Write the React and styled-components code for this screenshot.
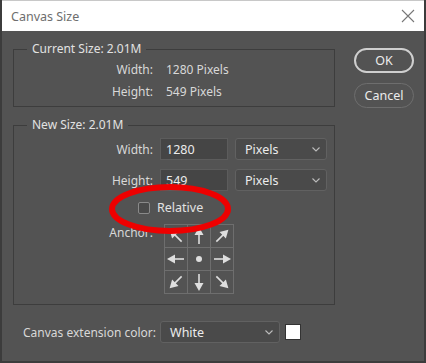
import React from 'react'
import styled, {createGlobalStyle} from 'styled-components'

const GlobalStyle = createGlobalStyle`
    html, body {
        margin: 0;
        padding: 0;
        background: #535353;
    }
    body {
        font-family: "Noto Sans", "Liberation Sans", sans-serif;
    }
`

const Window = styled.div`
    width: 426px;
    height: 363px;
    box-sizing: border-box;
    display: flex;
    flex-direction: column;
    background: #535353;
    border-left: 2px solid #3c3c3c;
    border-right: 2px solid #3c3c3c;
    border-bottom: 2px solid #3c3c3c;
    position: relative;
    overflow: hidden;
`

const TitleBar = styled.div`
    height: 31px;
    flex-shrink: 0;
    margin: 0 -2px;
    background: #ffffff;
    border-top: 1px solid #c8c8c8;
    border-left: 1px solid #c8c8c8;
    border-right: 1px solid #c8c8c8;
    box-sizing: border-box;
    display: flex;
    align-items: center;
    justify-content: space-between;
    padding: 0 10px 0 10px;
    color: #6e6e6e;
    font-size: 12.5px;
`

const Close = styled.svg`
    width: 14px;
    height: 14px;
`

const Body = styled.div`
    display: flex;
    padding: 10px 0 0 11px;
    gap: 19px;
`

const LeftCol = styled.div`
    display: flex;
    flex-direction: column;
    gap: 10px;
    width: 322px;
`

const Group = styled.fieldset`
    margin: 0;
    border: 1px solid #3d3d3d;
    padding: 0;
    height: ${p => p.$h}px;
    box-sizing: border-box;
    display: flex;
    flex-direction: column;
`

const Legend = styled.legend`
    color: #e2e2e2;
    font-size: 12px;
    padding: 0 5px;
    margin-left: 13px;
    line-height: 16px;
`

const InfoRows = styled.div`
    display: flex;
    flex-direction: column;
    gap: 6px;
    padding-top: 5px;
`

const InfoRow = styled.div`
    display: grid;
    grid-template-columns: 139px auto;
    column-gap: 13px;
    font-size: 12px;
    color: #d8d8d8;
    line-height: 16px;
`

const Label = styled.span`
    text-align: right;
    color: #d8d8d8;
    font-size: 12px;
`

const FieldRows = styled.div`
    display: flex;
    flex-direction: column;
    padding-top: 5px;
    gap: 9px;
`

const FieldRow = styled.div`
    display: grid;
    grid-template-columns: 139px 68px 92px;
    column-gap: 7px;
    align-items: center;
`

const Input = styled.div`
    height: 22px;
    box-sizing: border-box;
    background: #454545;
    border: 1px solid #5c5c5c;
    color: #ececec;
    font-size: 12.5px;
    padding-left: 5px;
    display: flex;
    align-items: center;
`

const Select = styled.div`
    height: 22px;
    width: ${p => p.$w || 92}px;
    box-sizing: border-box;
    background: #4a4a4a;
    border: 1px solid #616161;
    border-radius: 3px;
    color: #ececec;
    font-size: 12.5px;
    padding: 0 6px 0 9px;
    display: flex;
    align-items: center;
    justify-content: space-between;
`

const Chevron = styled.svg`
    width: 8px;
    height: 5px;
`

const CheckRow = styled.div`
    display: flex;
    align-items: center;
    gap: 7px;
    padding-left: 124px;
    margin-top: 8px;
    font-size: 12.5px;
    color: #e2e2e2;
`

const Box = styled.span`
    width: 10px;
    height: 10px;
    border: 1px solid #8a8a8a;
    border-radius: 2px;
    background: #4a4a4a;
`

const AnchorRow = styled.div`
    display: flex;
    align-items: flex-start;
    margin-top: 8px;
    gap: 11px;
`

const AnchorLabel = styled(Label)`
    width: 139px;
    margin-top: 0px;
`

const Grid = styled.div`
    display: grid;
    grid-template-columns: repeat(3, 23px);
    grid-template-rows: repeat(3, 23px);
    border-top: 1px solid #6e6e6e;
    border-left: 1px solid #6e6e6e;
`

const Cell = styled.div`
    border-right: 1px solid #6e6e6e;
    border-bottom: 1px solid #6e6e6e;
    display: flex;
    align-items: center;
    justify-content: center;
`

const Buttons = styled.div`
    display: flex;
    flex-direction: column;
    gap: 10px;
    padding-top: 7px;
`

const Button = styled.div`
    width: 60px;
    height: 25px;
    box-sizing: border-box;
    border-radius: 13px;
    border: ${p => p.$primary ? '2px solid #cfcfcf' : '1px solid #6e6e6e'};
    color: #ececec;
    font-size: 12.5px;
    display: flex;
    align-items: center;
    justify-content: center;
`

const Footer = styled.div`
    display: grid;
    grid-template-columns: 132px auto auto;
    justify-content: start;
    align-items: center;
    padding: 16px 0 0 21px;
    column-gap: 5px;
    font-size: 12px;
    color: #d8d8d8;
    white-space: nowrap;
`

const Swatch = styled.span`
    width: 14px;
    height: 14px;
    background: #fff;
    border: 1px solid #333;
`

const Annotation = styled.svg`
    position: absolute;
    left: 104px;
    top: 182px;
    width: 130px;
    height: 58px;
    pointer-events: none;
`

const dirs = [-135, -90, -45, 180, null, 0, 135, 90, 45]

const Arrow = ({angle}) => (
    <svg width="20" height="20" viewBox="-10 -10 20 20">
        {angle === null ? (
            <circle cx="0" cy="0" r="3" fill="#dedede"/>
        ) : (
            <g transform={`rotate(${angle})`}>
                <line x1="-8" y1="0" x2="3" y2="0" stroke="#dedede" strokeWidth="1.6"/>
                <polygon points="9,0 1,-4.5 1,4.5" fill="#dedede"/>
            </g>
        )}
    </svg>
)

const ChevronIcon = () => (
    <Chevron viewBox="0 0 8 5">
        <polyline points="0.5,0.5 4,4 7.5,0.5" fill="none" stroke="#bcbcbc" strokeWidth="1.1"/>
    </Chevron>
)

const App = () => {
    return (
        <>
            <GlobalStyle/>
            <Window>
                <TitleBar>
                    <span>Canvas Size</span>
                    <Close viewBox="0 0 14 14">
                        <path d="M1 1 L13 13 M13 1 L1 13" stroke="#777" strokeWidth="1.1"/>
                    </Close>
                </TitleBar>
                <Body>
                    <LeftCol>
                        <Group $h={66}>
                            <Legend>Current Size: 2.01M</Legend>
                            <InfoRows>
                                <InfoRow><Label>Width:</Label><span>1280 Pixels</span></InfoRow>
                                <InfoRow><Label>Height:</Label><span>549 Pixels</span></InfoRow>
                            </InfoRows>
                        </Group>
                        <Group $h={188}>
                            <Legend>New Size: 2.01M</Legend>
                            <FieldRows>
                                <FieldRow>
                                    <Label>Width:</Label>
                                    <Input>1280</Input>
                                    <Select>Pixels<ChevronIcon/></Select>
                                </FieldRow>
                                <FieldRow>
                                    <Label>Height:</Label>
                                    <Input>549</Input>
                                    <Select>Pixels<ChevronIcon/></Select>
                                </FieldRow>
                            </FieldRows>
                            <CheckRow><Box/>Relative</CheckRow>
                            <AnchorRow>
                                <AnchorLabel>Anchor:</AnchorLabel>
                                <Grid>
                                    {dirs.map((d, i) => (
                                        <Cell key={`anchor-${i}`}><Arrow angle={d}/></Cell>
                                    ))}
                                </Grid>
                            </AnchorRow>
                        </Group>
                    </LeftCol>
                    <Buttons>
                        <Button $primary>OK</Button>
                        <Button>Cancel</Button>
                    </Buttons>
                </Body>
                <Footer>
                    <span>Canvas extension color:</span>
                    <Select $w={120}>White<ChevronIcon/></Select>
                    <Swatch/>
                </Footer>
                <Annotation viewBox="0 0 130 58">
                    <ellipse cx="64" cy="27" rx="58" ry="22" fill="none" stroke="#ee0000" strokeWidth="6"/>
                </Annotation>
            </Window>
        </>
    )
}

export default App
